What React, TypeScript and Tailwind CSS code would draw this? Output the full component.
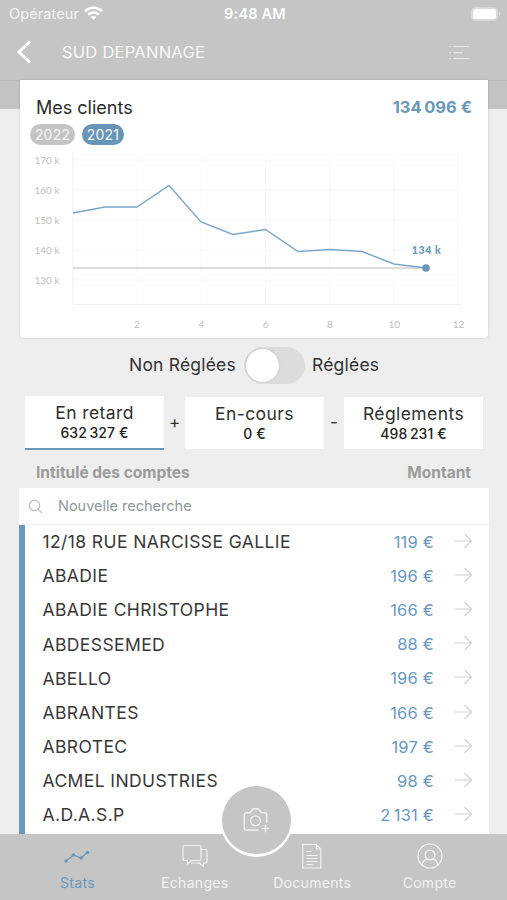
import React from 'react';

interface Account {
    name: string;
    amount: string;
}

const accounts: Account[] = [
    { name: '12/18 RUE NARCISSE GALLIE', amount: '119 €' },
    { name: 'ABADIE', amount: '196 €' },
    { name: 'ABADIE CHRISTOPHE', amount: '166 €' },
    { name: 'ABDESSEMED', amount: '88 €' },
    { name: 'ABELLO', amount: '196 €' },
    { name: 'ABRANTES', amount: '166 €' },
    { name: 'ABROTEC', amount: '197 €' },
    { name: 'ACMEL INDUSTRIES', amount: '98 €' },
    { name: 'A.D.A.S.P', amount: '2\u2009131 €' },
];

// Chart points, in svg units
const points: [number, number][] = [
    [53, 65], [85, 59], [117, 59], [149, 37.5], [181, 74], [213, 86.5],
    [245.5, 81.5], [278, 103.5], [310, 101.5], [342, 103.5], [374, 116], [406, 120],
];

const StatusBar: React.FC = () => (
    <div className="flex h-7 items-center justify-between pl-[9px] pr-[6px] text-white">
        <div className="flex w-40 items-center gap-[5px]">
            <span className="text-[14.5px] tracking-[0.1px] text-[#f4f4f4]">Opérateur</span>
            <svg className="-mt-[2px]" width="19" height="15" viewBox="0 0 19 15" fill="none" stroke="white" strokeWidth="2.6">
                <path d="M1 5.2C5.8 .6 13.2 .6 18 5.2" />
                <path d="M4.2 8.6C7.2 5.8 11.8 5.8 14.8 8.6" />
                <path d="M9.5 14l-2.9-3c1.6-1.5 4.2-1.5 5.8 0z" fill="white" stroke="none" />
            </svg>
        </div>
        <span className="text-[14.5px] font-semibold tracking-[0.2px]">9:48 AM</span>
        <div className="flex w-40 justify-end">
            <svg className="-mt-px" width="31" height="16" viewBox="0 0 31 16">
                <rect x="1" y="1" width="27" height="14" rx="4.5" fill="#d8d8d8" />
                <rect x="3" y="3" width="23" height="10" rx="2.5" fill="white" />
                <path d="M29 6v4c1.6-.6 1.6-3.4 0-4z" fill="#dedede" />
            </svg>
        </div>
    </div>
);

const NavBar: React.FC = () => (
    <div className="flex h-[52px] items-start pl-4 pr-[36px] pt-[11px]">
        <svg width="16" height="26" viewBox="0 0 16 26" fill="none" stroke="white" strokeWidth="3">
            <path d="M14 2.5L3 13l11 10.5" />
        </svg>
        <span className="ml-[30px] mt-px flex-1 text-[16.5px] leading-6 tracking-[0.25px] text-[#f8f8f8]">SUD DEPANNAGE</span>
        <svg className="mt-[5px]" width="24" height="18" viewBox="0 0 24 18" fill="none" stroke="#e6e6e6" strokeWidth="1.2">
            <path d="M2 2.5h2M6.5 2.5h15.5M2 8.7h2M6.5 8.7h9.5M2 14.5h2M6.5 14.5h15.5" />
        </svg>
    </div>
);

const Chart: React.FC = () => (
    <svg className="block" width="468" height="190" viewBox="0 0 468 190" fontFamily="Lato, sans-serif" fontSize="10">
        <g stroke="#f8f8f8">
            {[12, 42, 72, 102, 132].map((y) => <path key={y} d={`M53 ${y}H441`} />)}
            {[117, 181, 245.5, 310, 374, 438].map((x) => <path key={x} d={`M${x} 4V156`} />)}
            <path d="M53 3V156.5H442" stroke="#f1f1f1" fill="none" />
        </g>
        <g fill="#c0c0c0" textAnchor="end">
            {['170 k', '160 k', '150 k', '140 k', '130 k'].map((t, i) => (
                <text key={t} x="39.5" y={16 + i * 30.1}>{t}</text>
            ))}
        </g>
        <g fill="#c0c0c0" textAnchor="middle">
            {['2', '4', '6', '8', '10', '12'].map((t, i) => (
                <text key={t} x={117 + i * 64.3} y="180">{t}</text>
            ))}
        </g>
        <path d="M53 120H406" stroke="#dcdcdc" strokeWidth="2" />
        <polyline points={points.join(' ')} fill="none" stroke="#7ba6c6" strokeWidth="1.4" />
        <circle cx="406" cy="120" r="3.8" fill="#6998b9" />
        <text x="406.5" y="106" textAnchor="middle" fontSize="10.5" fontWeight="900" letterSpacing="0.6" fill="#6998b9">134 k</text>
    </svg>
);

const ClientsCard: React.FC = () => (
    <section className="mx-5 h-[258px] w-[468px] rounded-b-sm bg-white shadow-[0_0_3px_rgba(0,0,0,0.16)]">
        <div className="flex h-[44px] items-center justify-between pl-4 pr-[16px] pt-[10px]">
            <h2 className="text-[18px] text-[#2b2b2b]">Mes clients</h2>
            <span className="text-[16.5px] font-bold text-[#6998b9]">134{'\u2009'}096 €</span>
        </div>
        <div className="flex h-[24px] gap-[7px] pl-[10px] text-[14px] leading-[21px] tracking-[0.2px] text-[#f4f4f4]">
            <span className="h-[21px] w-[45px] rounded-full bg-[#c4c4c4] text-center">2022</span>
            <span className="h-[21px] w-[42px] rounded-full bg-[#6795b8] text-center">2021</span>
        </div>
        <Chart />
    </section>
);

interface TotalProps {
    label: string;
    value: string;
    active?: boolean;
}

const Total: React.FC<TotalProps> = ({ label, value, active = false }) => (
    <div
        className={`flex w-[139px] flex-col items-center bg-white pt-[6.5px] ${
            active ? 'h-[54px] border-b-2 border-[#6998b9]' : 'h-[52px]'
        }`}
    >
        <span className="text-[17.5px] leading-[20.5px] tracking-[0.4px] text-[#2f2f2f]">{label}</span>
        <span className="text-[14px] font-medium leading-[19px] tracking-[0.1px] text-[#222]">{value}</span>
    </div>
);

const AccountRow: React.FC<Account> = ({ name, amount }) => (
    <li className="flex h-[34.2px] items-center pl-[17.5px] pr-[16.5px]">
        <span className="flex-1 text-[17.5px] tracking-[0.4px] text-[#383838]">{name}</span>
        <span className="text-[16.5px] tracking-[0.2px] text-[#6998bf]">{amount}</span>
        <svg className="mb-[3px] ml-[19.5px]" width="19" height="16" viewBox="0 0 19 16" fill="none" stroke="#d0d0d0" strokeWidth="1.2">
            <path d="M1 8h16.5M10.5 1l7 7-7 7" />
        </svg>
    </li>
);

interface TabProps {
    label: string;
    active?: boolean;
    children: React.ReactNode;
}

const Tab: React.FC<TabProps> = ({ label, active = false, children }) => (
    <div className={`flex w-[117.4px] flex-col items-center pt-[9px] ${active ? 'text-[#6998bf]' : 'text-[#f2f2f2]'}`}>
        <svg width="28" height="26" viewBox="0 0 28 26" fill="none" stroke="currentColor" strokeWidth="1.2">
            {children}
        </svg>
        <span className="mt-[3.5px] text-[14px] leading-5 tracking-[0.3px]">{label}</span>
    </div>
);

const TabBar: React.FC = () => (
    <nav className="relative flex h-[66px] justify-center bg-[#c5c5c5]">
        <Tab label="Stats" active>
            <path d="M3 18L10.5 12L18 15L24.5 9.5" />
            <g fill="currentColor" stroke="none">
                <circle cx="3" cy="18" r="1.7" />
                <circle cx="10.5" cy="12" r="1.7" />
                <circle cx="18" cy="15" r="1.7" />
                <circle cx="24.5" cy="9.5" r="1.7" />
            </g>
        </Tab>
        <Tab label="Echanges">
            <path d="M3.5 2.5h15q1.5 0 1.5 1.5v12q0 1.5-1.5 1.5H10.5L6.5 21v-3.5h-3q-1.5 0-1.500-1.500V4q0-1.500 1.500-1.500z" />
            <path d="M20 6.5h4.500q1.500 0 1.500 1.500v10.500q0 1.500-1.500 1.500H22.500v3.500L18.500 20h-8.500" />
        </Tab>
        <Tab label="Documents">
            <path d="M4.8 1.500h13.500l4.500 4.500v19h-18zM18.300 1.500v4.500h4.500M8.500 8.500h5M8.500 12.500h11M8.500 15.500h11M8.500 18.500h11M8.500 21.500h6" />
        </Tab>
        <Tab label="Compte">
            <circle cx="14" cy="13" r="12" />
            <circle cx="14" cy="12" r="4.9" />
            <path d="M6.3 22.200c.3-3.500 2-5.500 5-6.300M21.700 22.200c-.3-3.500-2-5.500-5-6.300" />
        </Tab>
        {/* Scan button, straddles the list and the bar */}
        <button className="absolute left-[220px] top-[-50px] flex h-[73px] w-[73px] items-center justify-center rounded-full border-2 border-b-3 border-white bg-[#c5c5c5]">
            <svg width="30" height="28" viewBox="0 0 30 28" fill="none" stroke="#f0f0f0" strokeWidth="1.4" strokeLinejoin="round">
                <path d="M17 24H4.700q-2.500 0-2.500-2.500V9.200q0-2.500 2.500-2.500H8l2.200-3q.9-1 2-1h3q1.200 0 2 1l2.200 3h2.900q2.500 0 2.500 2.500v7.500" />
                <circle cx="13.5" cy="14.8" r="4.9" />
                <path d="M23.5 18.7v7.5M19.8 22.4h7.5" />
            </svg>
        </button>
    </nav>
);

export default function App() {
    return (
        <main className="flex h-[900px] w-[507px] flex-col overflow-hidden bg-[#eeeeee] font-['Inter','Liberation_Sans',sans-serif]">
            <header className="bg-[#c5c5c5]">
                <StatusBar />
                <NavBar />
            </header>
            <div className="-mb-[29px] h-[29px] shrink-0 border-t border-[#bababa] bg-[#c3c3c3]" />
            <div className="relative">
                <ClientsCard />
            </div>

            <div className="mt-2 flex h-[38px] items-center pl-[129px] text-[17.5px] tracking-[0.2px] text-[#333]">
                <span className="w-[115px]">Non Réglées</span>
                <div className="h-[37px] w-[61px] rounded-full bg-[#dcdcdc] p-[2px]">
                    <div className="h-[33px] w-[33px] rounded-full bg-white shadow-[0_0_2px_rgba(0,0,0,0.2)]" />
                </div>
                <span className="ml-[7px]">Réglées</span>
            </div>

            <div className="mt-3 flex h-[54px] items-center pl-[25px] text-[17px] text-[#333]">
                <Total label="En retard" value={'632\u2009327 €'} active />
                <span className="w-[21px] text-center">+</span>
                <Total label="En-cours" value="0 €" />
                <span className="w-[20px] text-center">-</span>
                <Total label="Réglements" value={'498\u2009231 €'} />
            </div>

            <div className="flex h-[38px] items-center justify-between pl-[36px] pr-[36px] pt-[7px] text-[15.5px] font-bold text-[#9b9b9b]">
                <span>Intitulé des comptes</span>
                <span>Montant</span>
            </div>

            <section className="ml-[19px] h-[346px] w-[470px] overflow-hidden bg-white">
                <div className="flex h-[37px] items-center gap-[15px] border-b border-[#f2f2f2] pl-[9px] text-[#8e989c]">
                    <svg width="15" height="15" viewBox="0 0 15 15" fill="none" stroke="#b5b5b5" strokeWidth="1.1">
                        <circle cx="6.5" cy="6.5" r="5.2" />
                        <path d="M10.3 10.3l3.500 3.500" />
                    </svg>
                    <span className="text-[14.5px]">Nouvelle recherche</span>
                </div>
                <ul className="h-[309px] border-l-[6.5px] border-[#6998b9]">
                    {accounts.map((a) => <AccountRow key={a.name} {...a} />)}
                </ul>
            </section>
            <TabBar />
        </main>
    );
}
